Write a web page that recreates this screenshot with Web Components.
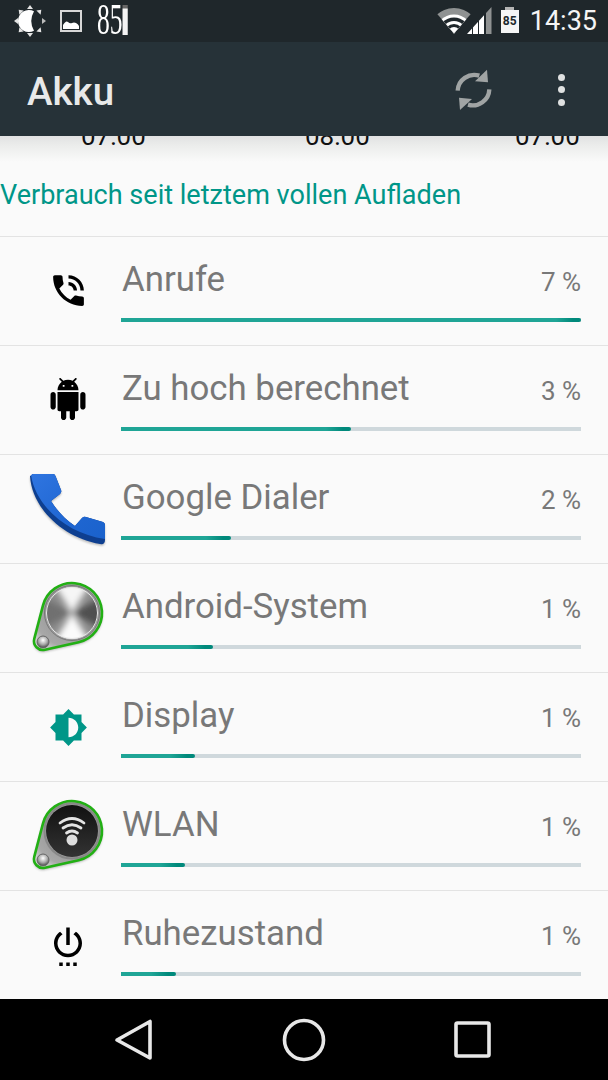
<!DOCTYPE html>
<html>
<head>
<meta charset="utf-8">
<title>Akku</title>
<style>
html, body { margin: 0; padding: 0; background: #000; }
body { width: 608px; height: 1080px; display: flex; flex-direction: column; overflow: hidden; font-family: Roboto, "Liberation Sans", sans-serif; }
battery-main { flex: 1; min-height: 0; }
</style>
</head>
<body>
<status-bar></status-bar>
<app-toolbar>Akku</app-toolbar>
<battery-main>
  <usage-row percent="100" value="7 %" label="Anrufe"><glyph-icon slot="icon" name="call" size="41" lift="1"></glyph-icon></usage-row>
  <usage-row percent="50" value="3 %" label="Zu hoch berechnet"><glyph-icon slot="icon" name="android" size="42" lift="1"></glyph-icon></usage-row>
  <usage-row percent="24" value="2 %" label="Google Dialer"><dialer-icon slot="icon"></dialer-icon></usage-row>
  <usage-row percent="20" value="1 %" label="Android-System"><pin-icon slot="icon" kind="metal"></pin-icon></usage-row>
  <usage-row percent="16" value="1 %" label="Display"><glyph-icon slot="icon" name="brightness" size="39" color="#009688"></glyph-icon></usage-row>
  <usage-row percent="14" value="1 %" label="WLAN"><pin-icon slot="icon" kind="wifi"></pin-icon></usage-row>
  <usage-row percent="12" value="1 %" label="Ruhezustand" last><glyph-icon slot="icon" name="power" size="42"></glyph-icon></usage-row>
</battery-main>
<nav-bar></nav-bar>

<script>
const statusBarTemplate = document.createElement('template');
statusBarTemplate.innerHTML = `
<style>
:host { display: flex; align-items: center; height: 42px; flex: none; background: #1f272b; color: #fff; font-family: Roboto, sans-serif; }
svg { display: block; flex: none; }
.sun { margin-left: 14px; }
.pic { margin-left: 14px; }
.temp { display: flex; flex: none; width: 53px; height: 30px; margin-left: 15px; margin-right: -22px; margin-top: -2px; transform: scaleX(.58); transform-origin: 0 50%; }
.temp span { display: block; font: 44px/30px "Liberation Serif", serif; white-space: nowrap; }
.temp i { display: block; width: 9px; height: 30px; background: linear-gradient(#666 0, #666 3px, #f4f4f4 4px); }
.spacer { flex: 1; }
.battery { display: flex; flex-direction: column; align-items: center; width: 18px; margin-left: 9px; margin-top: -2px; }
.battery i { display: block; width: 9px; height: 3px; background: #b5b5b5; }
.battery b { display: block; width: 18px; height: 23px; background: #f5f5f5; color: #20282c; font: 700 12px/22px Roboto, sans-serif; text-align: center; }
.clock { margin-left: 11px; margin-right: 11px; font-size: 27px; line-height: 42px; color: #f5f5f5; }
</style>
<svg class="sun" width="32" height="32" viewBox="0 0 32 32">
  <path fill="#fff" d="M20 6.200A11 11 0 1 0 20 25.800A20 20 0 0 1 20 6.200Z"/>
  <g fill="#e4e4e4">
    <polygon points="16,0 13,4 19,4"/>
    <polygon points="16,0 13,4 19,4" transform="rotate(45 16 16)"/>
    <polygon points="16,0 13,4 19,4" transform="rotate(90 16 16)" fill="#bbb"/>
    <polygon points="16,0 13,4 19,4" transform="rotate(135 16 16)"/>
    <polygon points="16,0 13,4 19,4" transform="rotate(180 16 16)"/>
    <polygon points="16,0 13,4 19,4" transform="rotate(225 16 16)"/>
    <polygon points="16,0 13,4 19,4" transform="rotate(270 16 16)"/>
    <polygon points="16,0 13,4 19,4" transform="rotate(315 16 16)"/>
  </g>
</svg>
<svg class="pic" width="22" height="22" viewBox="0 0 22 22">
  <rect x="1" y="1" width="20" height="20" fill="none" stroke="#d8d8d8" stroke-width="2"/>
  <path fill="#fff" d="M3 19V15Q6 10 8 12T12 13T16 13T19 16V19Z"/>
</svg>
<div class="temp"><span>85</span><i></i></div>
<div class="spacer"></div>
<svg width="34" height="26" viewBox="0 0 34 26" style="margin-top:-1px">
  <defs><clipPath id="fan"><polygon points="17,25.5 -4,1 -4,-2 38,-2 38,1"/></clipPath></defs>
  <g clip-path="url(#fan)">
    <circle cx="17" cy="25.5" r="25.5" fill="#8f9292"/>
    <circle cx="17" cy="25.5" r="19" fill="#fff"/>
    <circle cx="17" cy="25.5" r="16" fill="#1f272b"/>
    <circle cx="17" cy="25.5" r="12.5" fill="#fff"/>
    <circle cx="17" cy="25.5" r="9.5" fill="#1f272b"/>
    <circle cx="17" cy="25.5" r="6.5" fill="#fff"/>
  </g>
</svg>
<svg width="25" height="27" viewBox="0 0 25 27" style="margin-left:-4px;margin-top:-1px">
  <defs><clipPath id="sig"><polygon points="0,27 24.5,0 24.5,27"/></clipPath></defs>
  <g clip-path="url(#sig)">
    <rect x="0" y="0" width="5" height="27" fill="#fff"/>
    <rect x="6" y="0" width="5" height="27" fill="#fff"/>
    <rect x="12" y="0" width="5" height="27" fill="#fff"/>
    <rect x="19" y="0" width="6" height="27" fill="#8f9292"/>
  </g>
</svg>
<div class="battery"><i></i><b>85</b></div>
<div class="clock">14:35</div>
`;

class StatusBar extends HTMLElement {
    constructor() {
        super();
        this.attachShadow({ mode: 'open' });
        this.shadowRoot.appendChild(statusBarTemplate.content.cloneNode(true));
    }
}
customElements.define('status-bar', StatusBar);

const toolbarTemplate = document.createElement('template');
toolbarTemplate.innerHTML = `
<style>
:host { display: flex; align-items: center; height: 94px; flex: none; padding-left: 27px; box-sizing: border-box; background: #263238; color: #e8e9e9; font: 500 38.5px Roboto, sans-serif; }
.title { flex: 1; padding-top: 4px; }
svg { display: block; flex: none; margin-top: 2px; }
.more { display: flex; flex-direction: column; align-items: center; gap: 5.5px; width: 42px; margin-left: 30px; margin-right: 26px; margin-top: 1px; }
.more i { display: block; width: 7px; height: 7px; border-radius: 50%; background: #dfe1e1; }
</style>
<div class="title"><slot></slot></div>
<svg width="70" height="60" viewBox="0 0 210 180">
  <g fill="none" stroke="#a0a4a4" stroke-width="13">
    <path d="M53 92A50 50 0 0 1 118 47"/>
    <path d="M148 88A50 50 0 0 1 84 134"/>
  </g>
  <g fill="#a0a4a4">
    <polygon points="141,29 144,67 105,64"/>
    <polygon points="60,150 57,113 96,117"/>
  </g>
</svg>
<div class="more"><i></i><i></i><i></i></div>
`;

class AppToolbar extends HTMLElement {
    constructor() {
        super();
        this.attachShadow({ mode: 'open' });
        this.shadowRoot.appendChild(toolbarTemplate.content.cloneNode(true));
    }
}
customElements.define('app-toolbar', AppToolbar);

const batteryMainTemplate = document.createElement('template');
batteryMainTemplate.innerHTML = `
<style>
:host { display: block; overflow: hidden; background: #fafafa; font-family: Roboto, sans-serif; }
.chart { display: flex; align-items: flex-start; height: 10px; padding-left: 81px; overflow: hidden; background: linear-gradient(#e1e2e2, #ecedec); }
.chart span { flex: none; width: 65px; font-size: 26px; line-height: 30px; height: 30px; margin-top: -15px; color: #111; white-space: nowrap; }
.chart span + span { margin-left: 159px; }
.chart span + span + span { margin-left: 145px; }
.head { height: 91px; box-sizing: border-box; padding-top: 33px; border-bottom: 1px solid #e3e3e3; color: #009688; font-size: 27.05px; line-height: 32px; background: linear-gradient(#ecedec, #fafafa 16px); white-space: nowrap; }
</style>
<div class="chart"><span>07:00</span><span>08:00</span><span>07:00</span></div>
<div class="head">Verbrauch seit letztem vollen Aufladen</div>
<slot></slot>
`;

class BatteryMain extends HTMLElement {
    constructor() {
        super();
        this.attachShadow({ mode: 'open' });
        this.shadowRoot.appendChild(batteryMainTemplate.content.cloneNode(true));
    }
}
customElements.define('battery-main', BatteryMain);

const usageRowTemplate = document.createElement('template');
usageRowTemplate.innerHTML = `
<style>
:host { display: flex; height: 109px; box-sizing: border-box; border-bottom: 1px solid #e3e3e3; padding-left: 28px; padding-right: 27px; }
:host([last]) { border-bottom: 0; }
.icon { display: flex; align-items: center; justify-content: center; flex: none; width: 80px; height: 108px; margin-right: 13px; }
.text { flex: 1; min-width: 0; }
.line { display: flex; justify-content: space-between; align-items: baseline; height: 81px; box-sizing: border-box; padding-top: 21px; color: #787878; }
.label { font-size: 34.8px; line-height: 42px; padding-left: 1px; }
.value { font-size: 26px; }
.track { height: 4px; background: #cfd8dc; }
.fill { height: 4px; border-radius: 0 2px 2px 0; background: linear-gradient(90deg, #1fa596, #1fa596 calc(100% - 25px), #00897b calc(100% - 8px), #00897b); }
</style>
<div class="icon"><slot name="icon"></slot></div>
<div class="text">
  <div class="line"><span class="label"></span><span class="value"></span></div>
  <div class="track"><div class="fill"></div></div>
</div>
`;

class UsageRow extends HTMLElement {
    constructor() {
        super();
        this.attachShadow({ mode: 'open' });
        this.shadowRoot.appendChild(usageRowTemplate.content.cloneNode(true));
    }

    connectedCallback() {
        this.shadowRoot.querySelector('.label').textContent = this.getAttribute('label');
        this.shadowRoot.querySelector('.value').textContent = this.getAttribute('value');
        this.shadowRoot.querySelector('.fill').style.width = this.getAttribute('percent') + '%';
    }
}
customElements.define('usage-row', UsageRow);

// material style paths, 24x24 box
const glyphPaths = {
    call: 'M20 15.5c-1.25 0-2.45-.2-3.57-.57-.35-.11-.74-.03-1.02.24l-2.2 2.2c-2.83-1.44-5.15-3.75-6.59-6.59l2.2-2.21c.28-.26.36-.65.25-1-.37-1.12-.57-2.32-.57-3.57 0-.55-.45-1-1-1H4c-.55 0-1 .45-1 1 0 9.39 7.61 17 17 17 .55 0 1-.45 1-1v-3.5c0-.55-.45-1-1-1zM19 12h2c0-4.97-4.03-9-9-9v2c3.87 0 7 3.13 7 7zm-4 0h2c0-2.76-2.24-5-5-5v2c1.66 0 3 1.34 3 3z',
    android: 'M6 18c0 .55.45 1 1 1h1v3.5c0 .83.67 1.5 1.5 1.5s1.5-.67 1.5-1.5V19h2v3.5c0 .83.67 1.5 1.5 1.5s1.5-.67 1.5-1.5V19h1c.55 0 1-.45 1-1V8H6v10zM3.5 8C2.67 8 2 8.67 2 9.5v7c0 .83.67 1.5 1.5 1.5S5 17.33 5 16.5v-7C5 8.67 4.33 8 3.5 8zm17 0c-.83 0-1.5.67-1.5 1.5v7c0 .83.67 1.5 1.5 1.5s1.5-.67 1.5-1.5v-7c0-.83-.67-1.5-1.5-1.5zm-4.97-5.84l1.3-1.3c.2-.2.2-.51 0-.71-.2-.2-.51-.2-.71 0l-1.48 1.48C13.85 1.23 12.95 1 12 1c-.96 0-1.86.23-2.66.63L7.85.15c-.2-.2-.51-.2-.71 0-.2.2-.2.51 0 .71l1.31 1.31C6.97 3.26 6 5.01 6 7h12c0-1.99-.97-3.75-2.47-4.84zM10 5H9V4h1v1zm5 0h-1V4h1v1z',
    brightness: 'M20 15.31L23.31 12 20 8.69V4h-4.69L12 .69 8.69 4H4v4.69L.69 12 4 15.31V20h4.69L12 23.31 15.31 20H20v-4.69zM12 18V6c3.31 0 6 2.69 6 6s-2.69 6-6 6z',
    power: 'M7 24h2v-2H7v2zm4 0h2v-2h-2v2zm2-22h-2v10h2V2zm3.56 2.44l-1.45 1.45C16.84 6.94 18 8.83 18 11c0 3.31-2.69 6-6 6s-6-2.69-6-6c0-2.17 1.16-4.06 2.88-5.12L7.44 4.44C5.36 5.88 4 8.28 4 11c0 4.42 3.58 8 8 8s8-3.58 8-8c0-2.72-1.36-5.12-3.44-6.56zM15 24h2v-2h-2v2z'
};

class GlyphIcon extends HTMLElement {
    constructor() {
        super();
        this.attachShadow({ mode: 'open' });
    }

    connectedCallback() {
        const size = this.getAttribute('size') || 24;
        const color = this.getAttribute('color') || '#000';
        const lift = this.getAttribute('lift') || 0;
        this.shadowRoot.innerHTML = `
<style>
:host { display: block; width: ${size}px; height: ${size}px; margin-bottom: ${lift * 2}px; }
svg { display: block; }
</style>
<svg width="${size}" height="${size}" viewBox="0 0 24 24"><path fill="${color}" fill-rule="evenodd" d="${glyphPaths[this.getAttribute('name')]}"/></svg>`;
    }
}
customElements.define('glyph-icon', GlyphIcon);

const dialerOutline = 'M4 6Q3 5 5 5L25 5Q27 5 27.500 7L33 21Q34 23 32 25L23 32C30 43 37 50 47 57L54 49Q56 47 58 48L75 53Q77 54 77 56L77 71Q77 76 72 75C36 69 4 40 2 7Z';

const dialerIconTemplate = document.createElement('template');
dialerIconTemplate.innerHTML = `
<style>
:host { display: block; width: 80px; height: 80px; }
svg { display: block; }
</style>
<svg width="80" height="80" viewBox="0 0 80 80">
  <defs>
    <linearGradient id="blue" x1="0" y1="0" x2="1" y2="1">
      <stop offset="0" stop-color="#2f75e0"/>
      <stop offset=".6" stop-color="#1f66d2"/>
      <stop offset="1" stop-color="#1a62cc"/>
    </linearGradient>
    <filter id="soft" x="-10%" y="-10%" width="120%" height="120%"><feGaussianBlur stdDeviation=".8"/></filter>
  </defs>
  <path fill="#000" opacity=".25" filter="url(#soft)" transform="translate(0 1.500)" d="${dialerOutline}"/>
  <path fill="#0e3f90" d="${dialerOutline}"/>
  <path fill="url(#blue)" d="M4 6Q3 5 5 5L25 5Q27 5 27.500 7L33 21Q34 23 32 25L23 32C30 43 37 50 47 57L54 49Q56 47 58 48L75 53Q77 54 77 56L77 70C40 65 8 38 3 6Z"/>
</svg>
`;

class DialerIcon extends HTMLElement {
    constructor() {
        super();
        this.attachShadow({ mode: 'open' });
        this.shadowRoot.appendChild(dialerIconTemplate.content.cloneNode(true));
    }
}
customElements.define('dialer-icon', DialerIcon);

// big circle at 44,35 joined by tangents to a small one at 15,63
const pinShape = 'M15 27.400A30 30 0 1 1 50.600 64.300L17 71.800A9 9 0 0 1 6.300 60.700Z';

const pinFaces = {
    // brushed metal dial
    metal: `
  <circle cx="44" cy="35" r="26" fill="#8b8b8b"/>
  <g clip-path="url(#dial)">
    <g filter="url(#blur)">
      <polygon points="44,35 24,3 64,3" fill="#f6f6f6"/>
      <polygon points="44,35 24,67 64,67" fill="#fbfbfb"/>
      <polygon points="44,35 12,18 12,52" fill="#6f6f6f"/>
      <polygon points="44,35 76,18 76,52" fill="#505050"/>
    </g>
  </g>
  <circle cx="44" cy="35" r="25.500" fill="none" stroke="#e8e8e8" stroke-width="1"/>
  <circle cx="44" cy="35" r="27.500" fill="none" stroke="#777" stroke-width="1"/>`,
    // dark button with wifi arcs
    wifi: `
  <circle cx="44" cy="35" r="27.500" fill="none" stroke="#888" stroke-width="2"/>
  <circle cx="44" cy="35" r="26" fill="url(#dark)"/>
  <g fill="none" stroke="#e4e4e4" stroke-width="2.800" stroke-linecap="round">
    <path d="M32 27Q44 18 56 27"/>
    <path d="M35 32Q44 25.500 53 32"/>
    <path d="M38.500 37Q44 33 49.500 37"/>
  </g>
  <circle cx="44" cy="44" r="5.500" fill="#dedede"/>`
};

class PinIcon extends HTMLElement {
    constructor() {
        super();
        this.attachShadow({ mode: 'open' });
    }

    connectedCallback() {
        this.shadowRoot.innerHTML = `
<style>
:host { display: block; width: 80px; height: 80px; }
svg { display: block; }
</style>
<svg width="80" height="80" viewBox="0 0 80 80">
  <defs>
    <radialGradient id="body" cx=".55" cy=".4" r=".7">
      <stop offset="0" stop-color="#8a8a8a"/>
      <stop offset=".8" stop-color="#a8a8a8"/>
      <stop offset="1" stop-color="#d8d8d8"/>
    </radialGradient>
    <linearGradient id="dark" x1="0" y1="0" x2="0" y2="1">
      <stop offset="0" stop-color="#111"/>
      <stop offset="1" stop-color="#333"/>
    </linearGradient>
    <radialGradient id="ball" cx=".5" cy=".35" r=".6">
      <stop offset="0" stop-color="#fff"/>
      <stop offset=".6" stop-color="#aaa"/>
      <stop offset="1" stop-color="#555"/>
    </radialGradient>
    <clipPath id="dial"><circle cx="44" cy="35" r="26"/></clipPath>
    <filter id="blur" x="-20%" y="-20%" width="140%" height="140%"><feGaussianBlur stdDeviation="3"/></filter>
    <filter id="shadow" x="-20%" y="-20%" width="140%" height="140%"><feGaussianBlur stdDeviation="1.500"/></filter>
  </defs>
  <path d="${pinShape}" fill="#000" opacity=".4" transform="translate(0 1.500)" filter="url(#shadow)"/>
  <path d="${pinShape}" fill="url(#body)"/>
  ${pinFaces[this.getAttribute('kind')]}
  <circle cx="15" cy="64" r="6" fill="url(#ball)" stroke="#666" stroke-width="1"/>
  <path d="${pinShape}" fill="none" stroke="#22b014" stroke-width="2.600"/>
</svg>`;
    }
}
customElements.define('pin-icon', PinIcon);

const navBarTemplate = document.createElement('template');
navBarTemplate.innerHTML = `
<style>
:host { display: flex; height: 81px; flex: none; background: #000; padding-left: 113px; align-items: center; }
svg { display: block; flex: none; }
.home { margin-left: 127px; }
.recent { margin-left: 127px; }
</style>
<svg width="42" height="44" viewBox="0 0 42 44">
  <path d="M37 3.500V40L4 22Z" fill="none" stroke="#e8e8e8" stroke-width="3.600" stroke-linejoin="round"/>
</svg>
<svg class="home" width="44" height="44" viewBox="0 0 44 44">
  <circle cx="22" cy="22" r="19.500" fill="none" stroke="#e8e8e8" stroke-width="3.600"/>
</svg>
<svg class="recent" width="40" height="40" viewBox="0 0 40 40">
  <rect x="3" y="3" width="33" height="33" rx="1.500" fill="none" stroke="#e8e8e8" stroke-width="3.600"/>
</svg>
`;

class NavBar extends HTMLElement {
    constructor() {
        super();
        this.attachShadow({ mode: 'open' });
        this.shadowRoot.appendChild(navBarTemplate.content.cloneNode(true));
    }
}
customElements.define('nav-bar', NavBar);
</script>
</body>
</html>
